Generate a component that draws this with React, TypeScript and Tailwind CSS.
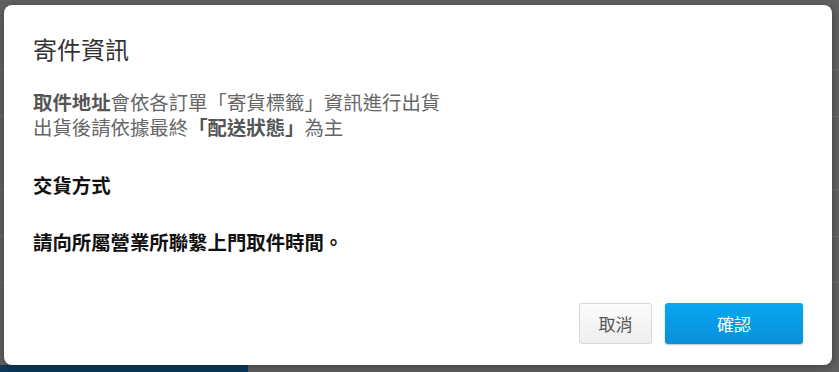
import type { FC } from "react";

const font = { fontFamily: '"Noto Sans CJK TC", "Noto Sans", sans-serif' };

const Backdrop: FC = () => (
  <div className="flex h-[372px] w-full flex-col bg-[#616161]">
    <div className="h-[70px] border-b border-[#6e6e6e]" />
    <div className="h-[47px] border-b border-[#6e6e6e]" />
    <div className="h-[73px] border-b border-[#6e6e6e]" />
    <div className="h-[47px] border-b border-[#6e6e6e]" />
    <div className="h-[46px] border-b border-[#6e6e6e]" />
    <div className="flex-1" />
    <div className="flex h-[7px]">
      <div className="w-[248px] bg-[#0d3a5c]" />
    </div>
  </div>
);

const ShippingInfoDialog: FC = () => (
  <div
    className="absolute left-[4px] top-[5px] flex h-[360px] w-[828px] flex-col rounded-[8px] bg-white px-[29px] pt-[26px] shadow-[0_2px_10px_rgba(0,0,0,0.35)]"
    style={font}
  >
    <h2 className="text-[24px] leading-[36px] text-[#333]">寄件資訊</h2>
    <div className="mt-[22px] text-[19.4px] leading-[25px] text-[#666]">
      <p>
        <b className="font-bold text-[#555]">取件地址</b>會依各訂單「寄貨標籤」資訊進行出貨
      </p>
      <p>
        出貨後請依據最終<b className="font-bold text-[#555]">「配送狀態」</b>為主
      </p>
    </div>
    <p className="mt-[33px] text-[19.4px] font-bold leading-[25px] text-[#111]">交貨方式</p>
    <p className="mt-[32px] text-[19.4px] font-bold leading-[25px] text-[#111]">
      請向所屬營業所聯繫上門取件時間。
    </p>
    <div className="mt-auto mb-[21px] flex justify-end gap-[13px]">
      <button className="h-[41px] w-[73px] rounded-[3px] border border-[#d6d6d6] bg-gradient-to-b from-[#fcfcfc] to-[#eeeeee] text-[17px] text-[#555]">
        取消
      </button>
      <button className="h-[41px] w-[138px] rounded-[3px] bg-gradient-to-b from-[#0aa6f2] to-[#0890d8] text-[17px] text-white shadow-[0_1px_2px_rgba(0,0,0,0.25)]">
        確認
      </button>
    </div>
  </div>
);

const App: FC = () => (
  <div className="relative h-[372px] w-full overflow-hidden">
    <Backdrop />
    <ShippingInfoDialog />
  </div>
);

export default App;
